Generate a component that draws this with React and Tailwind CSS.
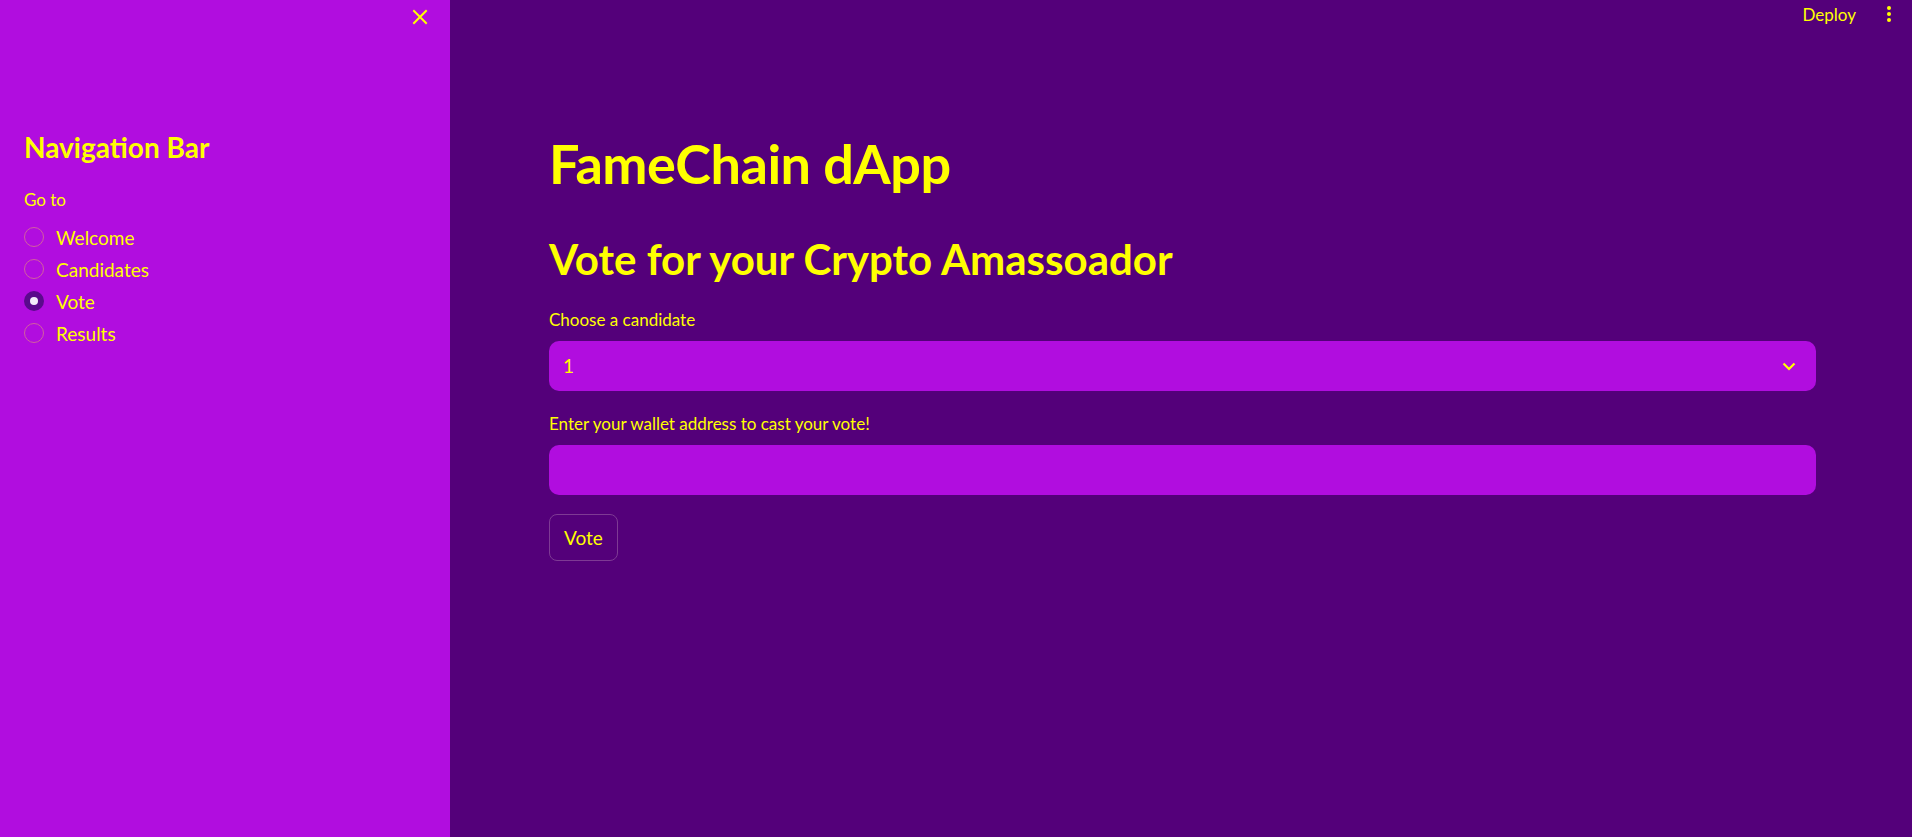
import React, { useState } from "react";

const pages = ["Welcome", "Candidates", "Vote", "Results"];

function Radio({ label, checked, onClick }) {
  return (
    <label className="flex items-center h-[32px] cursor-pointer" onClick={onClick}>
      {checked ? (
        <span className="w-[20px] h-[20px] rounded-full bg-[#5a0a8c] flex items-center justify-center">
          <span className="w-[8px] h-[8px] rounded-full bg-[#f3eefa]" />
        </span>
      ) : (
        <span className="w-[20px] h-[20px] rounded-full border border-[#d2609e]" />
      )}
      <span className="ml-[12px] text-[19px] leading-none text-[#ffff00]">{label}</span>
    </label>
  );
}

export default function App() {
  const [page, setPage] = useState("Vote");
  const [wallet, setWallet] = useState("");

  return (
    <div
      className="flex w-[1912px] h-[837px] overflow-hidden bg-[#54007a] text-[#ffff00]"
      style={{ fontFamily: '"Source Sans Pro", Lato, "Noto Sans", sans-serif' }}
    >
      {/* Sidebar */}
      <aside className="w-[450px] shrink-0 h-full bg-[#b10ddf] flex flex-col">
        <div className="flex justify-end pt-[8px] pr-[22px] h-[40px]">
          <svg width="16" height="16" viewBox="0 0 16 16" className="mt-[1px]">
            <path d="M2 2 L14 14 M14 2 L2 14" stroke="#ffff00" strokeWidth="2" strokeLinecap="square" />
          </svg>
        </div>
        <div className="px-[24px] pt-[88px]">
          <h2 className="text-[28px] font-bold leading-[38px]">Navigation Bar</h2>
          <p className="mt-[23px] text-[17px] leading-[22px]">Go to</p>
          <div className="mt-[10px] flex flex-col">
            {pages.map((p) => (
              <Radio key={p} label={p} checked={page === p} onClick={() => setPage(p)} />
            ))}
          </div>
        </div>
      </aside>

      {/* Main */}
      <main className="flex-1 h-full flex flex-col">
        <div className="flex justify-end items-center h-[26px] pt-[2px] pr-[20px] gap-[30px]">
          <span className="text-[17px] leading-none">Deploy</span>
          <svg width="6" height="18" viewBox="0 0 6 18">
            <circle cx="3" cy="3" r="2" fill="#ffff00" />
            <circle cx="3" cy="9" r="2" fill="#ffff00" />
            <circle cx="3" cy="15" r="2" fill="#ffff00" />
          </svg>
        </div>
        <div className="pl-[99px] pr-[96px] pt-[106px] flex flex-col">
          <h1 className="text-[54px] font-bold leading-[64px] tracking-[-0.5px]">FameChain dApp</h1>
          <h2 className="mt-[36px] text-[42px] font-bold leading-[54px]">
            Vote for your Crypto Amassoador
          </h2>

          <label className="mt-[23px] text-[17px] leading-[22px]">Choose a candidate</label>
          <div className="mt-[10px] h-[50px] rounded-[10px] bg-[#b10ddf] flex items-center justify-between pl-[14px] pr-[20px]">
            <span className="text-[19px]">1</span>
            <svg width="14" height="9" viewBox="0 0 14 9">
              <path d="M1.5 1.5 L7 7 L12.5 1.5" stroke="#ffff00" strokeWidth="2.2" fill="none" />
            </svg>
          </div>

          <label className="mt-[22px] text-[17px] leading-[22px]">
            Enter your wallet address to cast your vote!
          </label>
          <input
            value={wallet}
            onChange={(e) => setWallet(e.target.value)}
            className="mt-[10px] h-[50px] rounded-[10px] bg-[#b10ddf] px-[14px] text-[19px] outline-none"
          />

          <div className="mt-[19px]">
            <button className="h-[47px] px-[14px] rounded-[8px] border border-[#7e3a94] text-[19px] leading-none">
              Vote
            </button>
          </div>
        </div>
      </main>
    </div>
  );
}
